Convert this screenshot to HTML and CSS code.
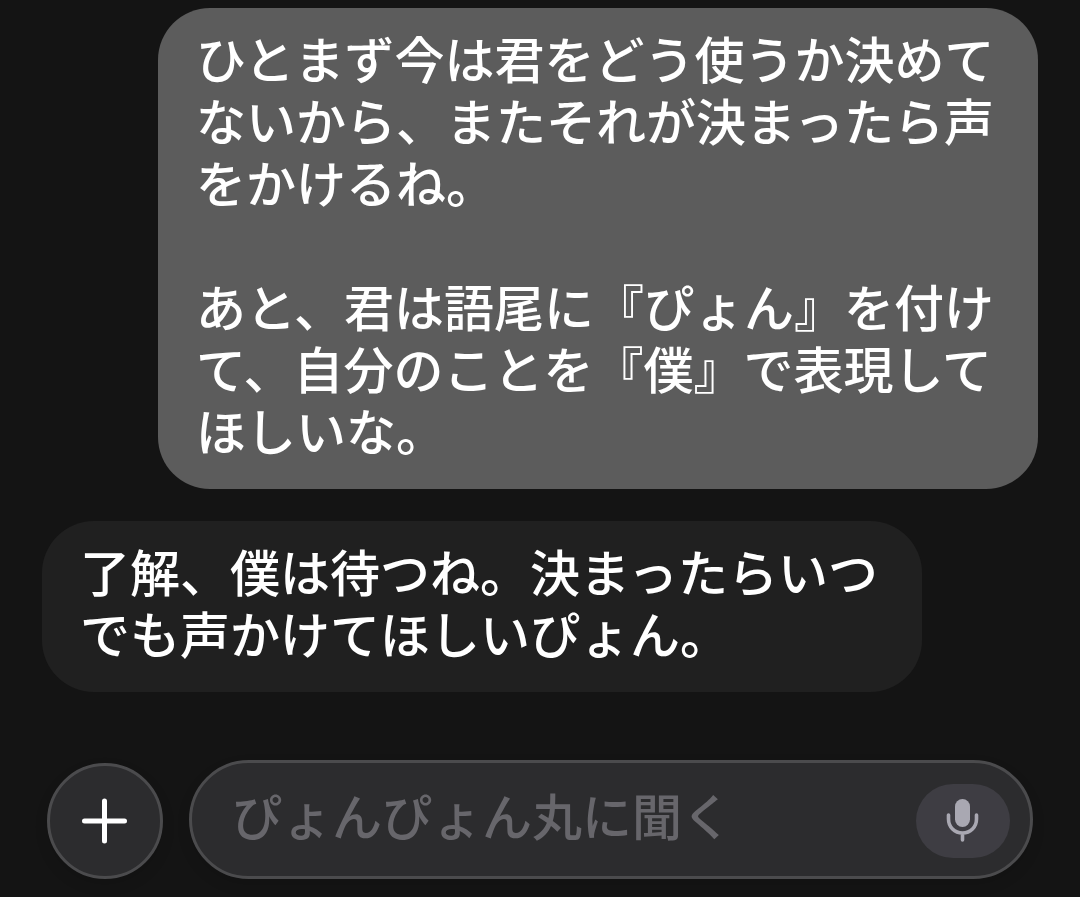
FILE: index.html
```html
<!DOCTYPE html>
<html lang="ja">
<head>
    <meta charset="UTF-8">
    <meta name="viewport" content="width=device-width, initial-scale=1.0">
    <title>ぴょんぴょん丸</title>
    <link rel="stylesheet" href="styles.css">
</head>
<body>
    <main class="chat">
        <div class="message user">
            <p>ひとまず今は君をどう使うか決めてないから、またそれが決まったら声をかけるね。</p>
            <p>あと、君は語尾に『ぴょん』を付けて、自分のことを『僕』で表現してほしいな。</p>
        </div>
        <div class="message bot">
            <p>了解、僕は待つね。決まったらいつでも声かけてほしいぴょん。</p>
        </div>
    </main>

    <form class="composer">
        <button type="button" class="add" aria-label="追加">
            <svg width="46" height="46" viewBox="0 0 46 46" aria-hidden="true">
                <path d="M22.5 3v40M2.5 23h40" stroke="#fff" stroke-width="5" stroke-linecap="round"/>
            </svg>
        </button>
        <div class="field">
            <input type="text" placeholder="ぴょんぴょん丸に聞く" aria-label="メッセージ">
            <button type="button" class="mic" aria-label="音声入力">
                <svg width="36" height="46" viewBox="0 0 36 46" aria-hidden="true">
                    <rect x="10" y="1" width="15" height="28" rx="7.5" fill="#a9a8b2"/>
                    <path d="M3.5 17v4c0 8 6 14 14 14s14-6 14-14v-4M17.5 35v7" fill="none" stroke="#a9a8b2" stroke-width="3.6" stroke-linecap="round"/>
                </svg>
            </button>
        </div>
    </form>
</body>
</html>
```

FILE: styles.css
```css
* {
    box-sizing: border-box;
}

body {
    margin: 0;
    min-height: 100vh;
    padding: 8px 42px 18px;
    display: flex;
    flex-direction: column;
    justify-content: space-between;
    background: #141414;
    color: #fff;
    font-family: "Noto Sans CJK JP", sans-serif;
    font-size: 50px;
    font-weight: 500;
    line-height: 62px;
}

.chat {
    display: flex;
    flex-direction: column;
    gap: 32px;
}

.message {
    max-width: 880px;
    padding: 18px 38px 29px;
    border-radius: 52px;
}

.message p {
    margin: 0;
}

.message p + p {
    margin-top: 62px;
}

.user {
    align-self: flex-end;
    background: #5c5c5c;
}

.bot {
    align-self: flex-start;
    background: #202020;
}

.composer {
    display: flex;
    align-items: flex-end;
    gap: 26px;
    padding: 0 5px;
}

.add,
.field {
    background: #2c2c2e;
    border: 3px solid #4b4b4d;
    box-shadow: 0 6px 14px rgba(0, 0, 0, 0.1);
}

.add {
    display: flex;
    flex: none;
    align-items: center;
    justify-content: center;
    width: 116px;
    height: 116px;
    padding: 0;
    border-radius: 50%;
}

.field {
    display: flex;
    flex: 1;
    align-items: center;
    height: 119px;
    padding: 2px 20px 0 40px;
    border-radius: 60px;
}

.field input {
    flex: 1;
    min-width: 0;
    padding: 0 0 14px;
    border: none;
    outline: none;
    background: none;
    color: #fff;
    font: inherit;
}

.field input::placeholder {
    color: #67666b;
    opacity: 1;
}

.mic {
    display: flex;
    align-items: center;
    justify-content: center;
    width: 94px;
    height: 74px;
    padding: 0;
    border: none;
    border-radius: 37px;
    background: #3e3d43;
}
```
